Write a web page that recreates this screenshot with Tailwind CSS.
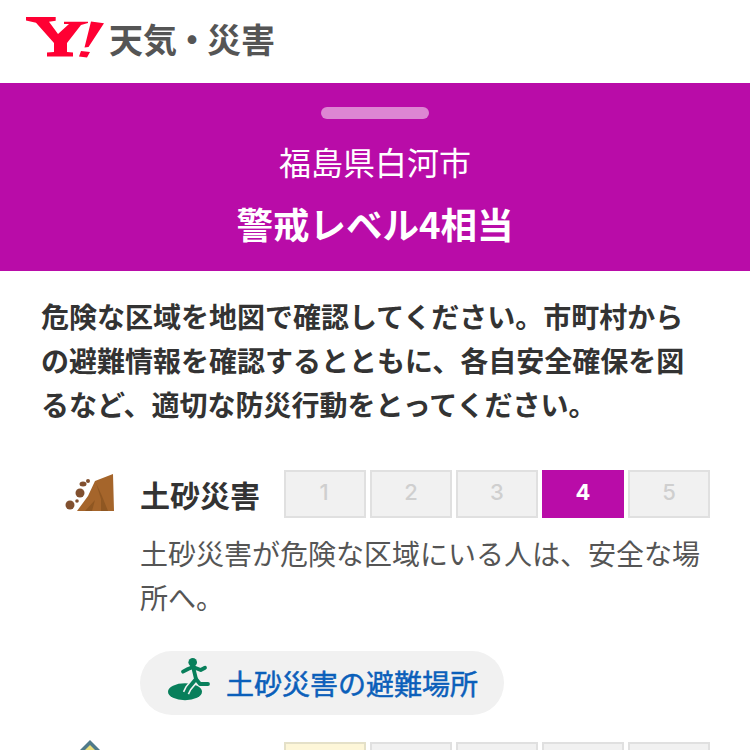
<!doctype html>
<html lang="ja"><head><meta charset="utf-8"><script src="https://cdn.jsdelivr.net/npm/@tailwindcss/browser@4"></script></head>
<body class="bg-white overflow-hidden font-['Noto_Sans_CJK_JP',sans-serif]">
<div class="w-[750px] h-[750px] overflow-hidden">
<header class="h-[83px] flex items-start pl-[26px] pt-[17px]">
  <svg width="78" height="41" viewBox="0 0 78 41" class="shrink-0"><path fill="#ff0033" d="M0 0H29.700V3.700L23 4.700L32 17L43 7H38V4.700H62V6L55 8L41 26V35L47 35.500V39.500H21V35.500L28 35V26L10 5.700L0 3.500Z"/><path fill="#ff0033" d="M65 4.500L78 6.300L62.500 30L58.500 30.500ZM55 34L64 35L61 40.500L53 39.500Z"/></svg>
  <span class="ml-[5px] -mt-[2px] text-[34px] leading-[48px] font-bold text-[#555] whitespace-nowrap">天気<span class="-mx-[2px]">・</span>災害</span>
</header>
<section class="h-[188px] bg-[#b90ca8] flex flex-col items-center text-white">
  <div class="w-[108px] h-[12px] rounded-full bg-[#dd86d3] mt-[24px]"></div>
  <p class="text-[32px] leading-[44px] mt-[20px]">福島県白河市</p>
  <h1 class="text-[36.500px] leading-[52px] font-bold mt-[15px]">警戒レベル4相当</h1>
</section>
<main class="px-[41px]">
  <p class="mt-[23px] text-[28px] leading-[44px] font-bold text-[#333]">危険な区域を地図で確認してください。市町村からの避難情報を確認するとともに、各自安全確保を図るなど、適切な防災行動をとってください。</p>
  <div class="mt-[44px] flex">
    <div class="w-[99px] shrink-0 pl-[24px] pt-[3px]">
      <svg width="50" height="40" viewBox="0 0 50 40"><path fill="#a5652b" d="M12 38L23 23L30 8L48 1L49 38Z"/><path fill="#8f5722" d="M31 10L37 23L43 38H36L36 26ZM20 38L30 27L27 38Z"/><g fill="#81502f"><circle cx="5" cy="32" r="4.500"/><circle cx="12" cy="28" r="1.800"/><circle cx="15" cy="20" r="4.500"/><ellipse cx="18" cy="11" rx="3.500" ry="2.500"/><circle cx="23" cy="8" r="2"/></g></svg>
    </div>
    <div class="flex-1 min-w-0">
      <div class="flex items-center">
        <span class="text-[30px] leading-[48px] font-bold text-[#333] w-[144px] shrink-0 whitespace-nowrap">土砂災害</span>
        <div class="flex gap-[4px] font-['Inter',sans-serif] font-medium text-[22px]">
          <div class="w-[82px] h-[48px] pb-[3px] pr-[2px] bg-[#f1f1f1] border-2 border-[#e0e0e0] text-[#cfcfcf] flex items-center justify-center">1</div>
          <div class="w-[82px] h-[48px] pb-[3px] bg-[#f1f1f1] border-2 border-[#e0e0e0] text-[#cfcfcf] flex items-center justify-center">2</div>
          <div class="w-[82px] h-[48px] pb-[3px] bg-[#f1f1f1] border-2 border-[#e0e0e0] text-[#cfcfcf] flex items-center justify-center">3</div>
          <div class="w-[82px] h-[48px] pb-[3px] bg-[#b90ca8] text-white font-bold flex items-center justify-center">4</div>
          <div class="w-[82px] h-[48px] pb-[3px] bg-[#f1f1f1] border-2 border-[#e0e0e0] text-[#cfcfcf] flex items-center justify-center">5</div>
        </div>
      </div>
      <p class="mt-[13px] text-[28px] leading-[44px] text-[#555]">土砂災害が危険な区域にいる人は、安全な場所へ。</p>
      <a class="mt-[32px] flex items-center h-[64px] w-[364px] rounded-full bg-[#f1f1f1] pl-[28px] gap-[14px]">
        <svg width="44" height="52" viewBox="0 0 44 52" class="shrink-0"><ellipse cx="17" cy="34.700" rx="17" ry="8.500" fill="#087f5b"/><path d="M28 22L20.300 31.300L18 36" fill="none" stroke="#f1f1f1" stroke-width="7"/><g fill="none" stroke="#087f5b" stroke-width="3.800" stroke-linecap="round" stroke-linejoin="round"><path d="M15 14.700L20 12L25 10L32.700 13L37 10.700"/><path d="M25.300 10.700L28 22L20.300 31.300L18 36"/><path d="M28 22L32 27H40"/></g><circle cx="24.700" cy="5.300" r="4.300" fill="#087f5b"/></svg>
        <span class="text-[28px] leading-none text-[#0b5fba] whitespace-nowrap [-webkit-text-stroke:0.5px_#0b5fba]">土砂災害の避難場所</span>
      </a>
    </div>
  </div>
  <div class="mt-[27px] flex">
    <div class="w-[243px] shrink-0 pl-[30px]">
      <svg width="38" height="40" viewBox="0 0 38 40" class="-mt-[2px] overflow-visible"><path fill="#4f7a8a" d="M19 0L39 20V30H-1V20Z"/><path fill="#e8dd7a" d="M19 5L35 21V30H3V21Z"/></svg>
    </div>
    <div class="flex gap-[4px]">
      <div class="w-[82px] h-[48px] bg-[#fdf6d8] border-2 border-[#e4e0c8]"></div>
      <div class="w-[82px] h-[48px] bg-[#f1f1f1] border-2 border-[#e0e0e0]"></div>
      <div class="w-[82px] h-[48px] bg-[#f1f1f1] border-2 border-[#e0e0e0]"></div>
      <div class="w-[82px] h-[48px] bg-[#f1f1f1] border-2 border-[#e0e0e0]"></div>
      <div class="w-[82px] h-[48px] bg-[#f1f1f1] border-2 border-[#e0e0e0]"></div>
    </div>
  </div>
</main>
</div>
</body></html>
